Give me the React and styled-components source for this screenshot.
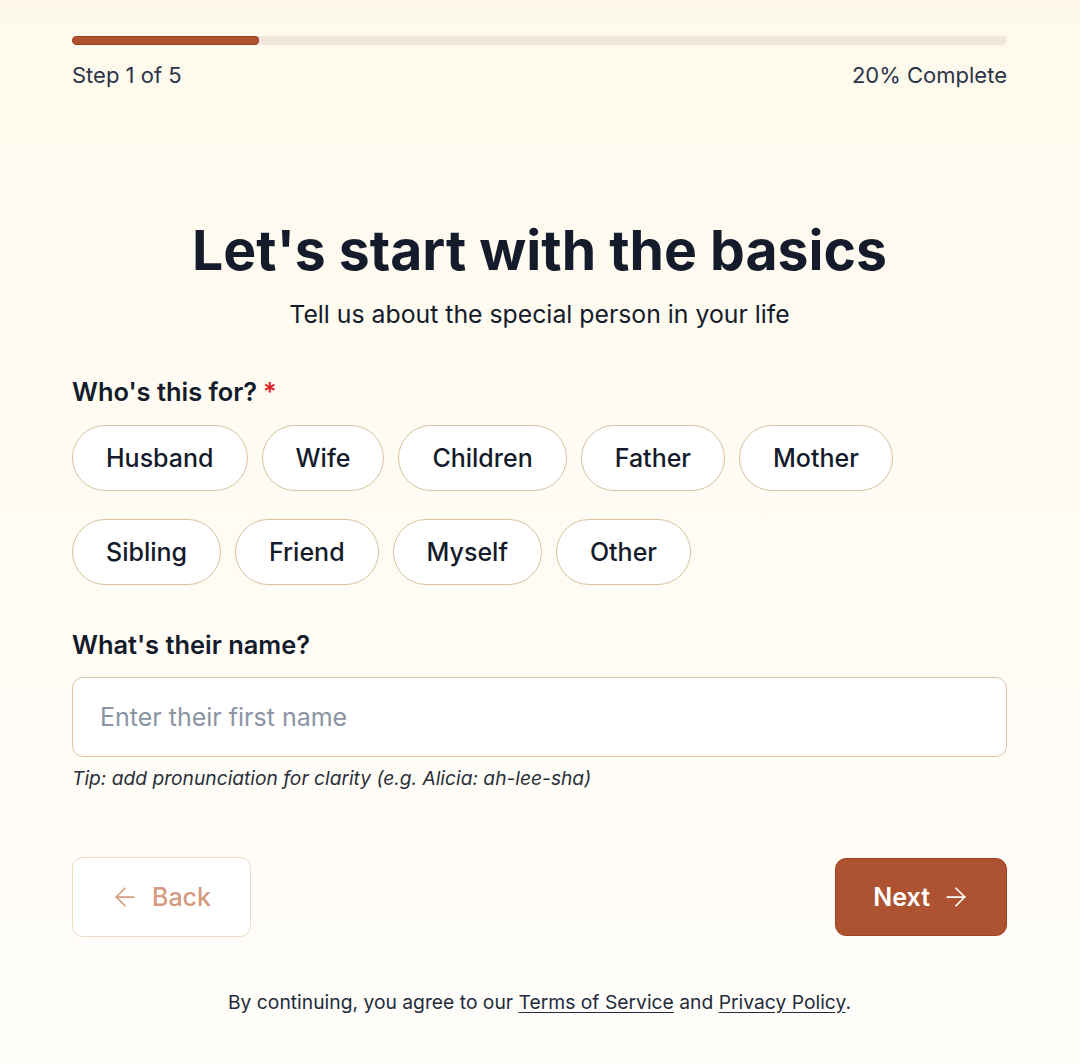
import React, { useState } from "react";
import styled, { createGlobalStyle } from "styled-components";
import { ArrowLeft, ArrowRight } from "lucide-react";

const GlobalStyle = createGlobalStyle`
  html, body {
    margin: 0;
    padding: 0;
  }

  body {
    font-family: Inter, "Noto Sans", "Liberation Sans", sans-serif;
    background: linear-gradient(180deg, #fef9ec 0%, #fffcf5 55%, #fffdfa 100%);
    min-height: 1064px;
    color: #141b2b;
  }

  * {
    box-sizing: border-box;
  }
`;

const Page = styled.main`
  padding: 36px 73px 40px 72px;
  display: flex;
  flex-direction: column;
`;

const Track = styled.div`
  height: 9px;
  border-radius: 99px;
  background: #f0e6dc;
  overflow: hidden;
`;

const Fill = styled.div`
  height: 100%;
  border-radius: 99px;
  background: #af532f;
  box-shadow: inset 0 0 0 1px #9f3f1d;
`;

const StepRow = styled.div`
  margin-top: 15px;
  display: flex;
  justify-content: space-between;
  font-size: 22px;
  line-height: 31px;
  color: #2b3547;
`;

const Title = styled.h1`
  margin: 125px 0 0;
  text-align: center;
  font-size: 55.3px;
  line-height: 68px;
  font-weight: 700;
  color: #141b2b;
`;

const Subtitle = styled.p`
  margin: 14px 0 0;
  text-align: center;
  font-size: 24.8px;
  line-height: 33px;
  color: #141b2b;
`;

const Label = styled.h2`
  margin: ${(p) => p.$top}px 0 0;
  font-size: 25.4px;
  line-height: 32px;
  font-weight: 600;
  color: #141b2b;
`;

const Required = styled.span`
  color: #dc2626;
  margin-left: 6px;
`;

const Chips = styled.div`
  margin-top: 17px;
  display: flex;
  flex-wrap: wrap;
  column-gap: 14px;
  row-gap: 28px;
  max-width: 840px;
`;

const Chip = styled.button`
  height: 66px;
  padding: 0 33px;
  border-radius: 999px;
  border: 1.5px solid ${(p) => (p.$active ? "#af532f" : "#d8c29e")};
  background: ${(p) => (p.$active ? "#fbeee6" : "#ffffff")};
  font-family: inherit;
  font-size: 25px;
  font-weight: 500;
  color: #141b2b;
  cursor: pointer;
`;

const Input = styled.input`
  margin-top: 16px;
  width: 100%;
  height: 80px;
  padding: 0 27px;
  border: 1.5px solid #dcc6a2;
  border-radius: 11px;
  background: #ffffff;
  font-family: inherit;
  font-size: 25px;
  color: #141b2b;
  outline: none;

  &::placeholder {
    color: #8b94a3;
  }
`;

const Tip = styled.p`
  margin: 9px 0 0;
  font-size: 19.2px;
  line-height: 24px;
  font-style: italic;
  color: #2a2f3a;
`;

const Actions = styled.div`
  margin-top: 67px;
  display: flex;
  justify-content: space-between;
  align-items: center;
`;

const NavButton = styled.button`
  height: ${(p) => (p.$primary ? 78 : 80)}px;
  padding: ${(p) => (p.$primary ? "0 35px 0 37px" : "0 39px 0 37px")};
  display: flex;
  align-items: center;
  gap: ${(p) => (p.$primary ? 11 : 12)}px;
  border-radius: 11px;
  font-family: inherit;
  font-size: 25px;
  font-weight: ${(p) => (p.$primary ? 600 : 500)};
  cursor: pointer;
  border: 1.5px solid ${(p) => (p.$primary ? "#a2421f" : "#ecdcc6")};
  background: ${(p) => (p.$primary ? "#ae5331" : "#ffffff")};
  color: ${(p) => (p.$primary ? "#ffffff" : "#d69a80")};

  svg {
    flex-shrink: 0;
  }
`;

const Footer = styled.p`
  margin: 52px 0 0;
  text-align: center;
  font-size: 19.3px;
  line-height: 26px;
  color: #232b3b;

  a {
    color: #232b3b;
    text-decoration: underline;
    text-underline-offset: 3px;
  }
`;

const people = [
  "Husband",
  "Wife",
  "Children",
  "Father",
  "Mother",
  "Sibling",
  "Friend",
  "Myself",
  "Other",
];

export default function App() {
  const [who, setWho] = useState(null);
  const step = 1;
  const total = 5;
  const pct = (step / total) * 100;

  return (
    <>
      <GlobalStyle />
      <Page>
        <Track>
          <Fill style={{ width: `${pct}%` }} />
        </Track>
        <StepRow>
          <span>
            Step {step} of {total}
          </span>
          <span>{pct}% Complete</span>
        </StepRow>

        <Title>Let's start with the basics</Title>
        <Subtitle>Tell us about the special person in your life</Subtitle>

        <Label $top={45}>
          Who's this for?<Required>*</Required>
        </Label>
        <Chips>
          {people.map((p) => (
            <Chip key={p} $active={who === p} onClick={() => setWho(p)}>
              {p}
            </Chip>
          ))}
        </Chips>

        <Label $top={44}>What's their name?</Label>
        <Input placeholder="Enter their first name" />
        <Tip>Tip: add pronunciation for clarity (e.g. Alicia: ah-lee-sha)</Tip>

        <Actions>
          <NavButton>
            <ArrowLeft size={30} strokeWidth={1.4} />
            Back
          </NavButton>
          <NavButton $primary>
            Next
            <ArrowRight size={30} strokeWidth={1.4} />
          </NavButton>
        </Actions>

        <Footer>
          By continuing, you agree to our <a href="#terms">Terms of Service</a>{" "}
          and <a href="#privacy">Privacy Policy</a>.
        </Footer>
      </Page>
    </>
  );
}
